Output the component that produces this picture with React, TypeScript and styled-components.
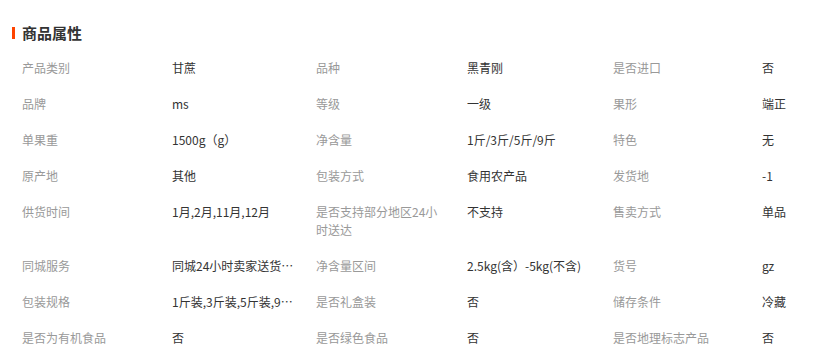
import React from "react";
import styled, { createGlobalStyle } from "styled-components";

const GlobalStyle = createGlobalStyle`
  body {
    margin: 0;
    background: #fff;
    font-family: "Noto Sans CJK SC", "Microsoft YaHei", sans-serif;
  }
`;

const Panel = styled.div`
  padding: 23px 0 0 22px;
  width: 827px;
  box-sizing: border-box;
`;

const Title = styled.h3`
  position: relative;
  margin: 0 0 7px;
  font-size: 15px;
  line-height: 20px;
  font-weight: bold;
  color: #333;

  &::before {
    content: "";
    position: absolute;
    left: -10px;
    top: 4px;
    width: 3px;
    height: 12px;
    background: #ff4400;
  }
`;

const Grid = styled.div`
  display: grid;
  grid-template-columns: 150px 144px 151px 146px 149px 1fr;
`;

const Cell = styled.div<{ $label?: boolean }>`
  padding: 9px 20px 9px 0;
  font-size: 12px;
  line-height: 18px;
  color: ${(p) => (p.$label ? "#999" : "#333")};
  overflow: hidden;
  text-overflow: ellipsis;
  white-space: ${(p) => (p.$label ? "normal" : "nowrap")};
  word-break: break-all;
`;

const attrs: [string, string][] = [
  ["产品类别", "甘蔗"],
  ["品种", "黑青刚"],
  ["是否进口", "否"],
  ["品牌", "ms"],
  ["等级", "一级"],
  ["果形", "端正"],
  ["单果重", "1500g（g）"],
  ["净含量", "1斤/3斤/5斤/9斤"],
  ["特色", "无"],
  ["原产地", "其他"],
  ["包装方式", "食用农产品"],
  ["发货地", "-1"],
  ["供货时间", "1月,2月,11月,12月"],
  ["是否支持部分地区24小时送达", "不支持"],
  ["售卖方式", "单品"],
  ["同城服务", "同城24小时卖家送货上门"],
  ["净含量区间", "2.5kg(含）-5kg(不含)"],
  ["货号", "gz"],
  ["包装规格", "1斤装,3斤装,5斤装,9斤装"],
  ["是否礼盒装", "否"],
  ["储存条件", "冷藏"],
  ["是否为有机食品", "否"],
  ["是否绿色食品", "否"],
  ["是否地理标志产品", "否"],
];

export default function App() {
  return (
    <Panel>
      <GlobalStyle />
      <Title>商品属性</Title>
      <Grid>
        {attrs.map(([k, v]) => (
          <React.Fragment key={k}>
            <Cell $label>{k}</Cell>
            <Cell title={v}>{v}</Cell>
          </React.Fragment>
        ))}
      </Grid>
    </Panel>
  );
}
